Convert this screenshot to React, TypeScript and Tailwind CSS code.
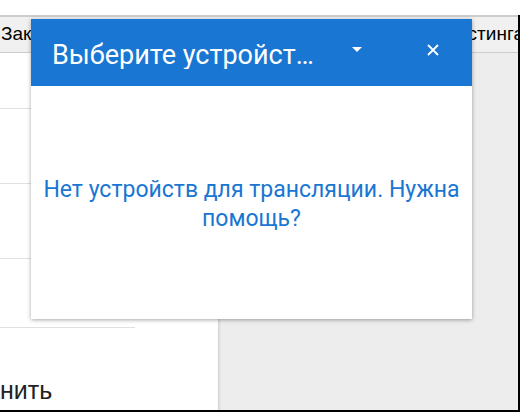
import * as React from 'react';

const Caret = () => (
	<svg width="12" height="6" viewBox="0 0 12 6" className="block">
		<path d="M1 0h10L6 5z" fill="#fff" />
	</svg>
);

const Close = () => (
	<svg width="12" height="12" viewBox="0 0 12 12" className="block">
		<path d="M1 1l10 10M11 1L1 11" stroke="#fff" strokeWidth="1.8" />
	</svg>
);

const CastDialog = () => {
	return (
		<div className="absolute left-[31px] top-[19px] w-[441px] h-[300px] bg-white flex flex-col shadow-[0_1px_4px_rgba(0,0,0,0.35)] [font-family:Roboto,'Noto_Sans',sans-serif]">
			<div className="h-[67px] bg-[#1976d2] flex items-center pl-[21px] pr-[33px]">
				<h2 className="w-[266px] shrink-0 truncate text-[27px] leading-none text-white pt-[6px]">
					Выберите устройство для трансляции
				</h2>
				<div className="ml-[33px] pb-[6px]">
					<Caret />
				</div>
				<div className="ml-auto pb-[6px]">
					<Close />
				</div>
			</div>
			<div className="flex-1 flex items-center justify-center px-[6px] pt-[2px]">
				<p className="text-center text-[23px] leading-[29px] text-[#1976d2]">
					Нет устройств для трансляции. Нужна
					<br />
					помощь?
				</p>
			</div>
		</div>
	);
};

export default function App() {
	return (
		<div className="relative w-[520px] h-[412px] overflow-hidden bg-white flex flex-col [font-family:'Liberation_Sans',Arial,sans-serif]">
			<div className="h-[15px] shrink-0" />
			<div className="flex-1 flex flex-col border-r-2 border-b-2 border-black">
				<div className="h-[38px] shrink-0 border-t-2 border-b border-[#cdcdcd] bg-[#f0f0f0] flex items-center justify-between text-[19px] text-black">
					<span className="pl-[1px]">Заказ</span>
					<span className="-mr-[6px]">Настройки хостинга</span>
				</div>
				<div className="flex-1 flex">
					<div className="w-[218px] shrink-0 bg-white flex flex-col">
						<div className="h-[56px] border-b border-[#e0e0e0]" />
						<div className="h-[75px] border-b border-[#e0e0e0]" />
						<div className="h-[75px] border-b border-[#e0e0e0]" />
						<div className="h-[69px] w-[135px] border-b border-[#e0e0e0]" />
						<div className="pt-[50px] -ml-[72px] text-[25px] leading-none text-[#222] whitespace-nowrap">
							Сохранить
						</div>
					</div>
					<div className="flex-1 bg-[#ededed] shadow-[inset_3px_0_3px_-2px_rgba(0,0,0,0.15)]" />
				</div>
			</div>
			<CastDialog />
		</div>
	);
}
